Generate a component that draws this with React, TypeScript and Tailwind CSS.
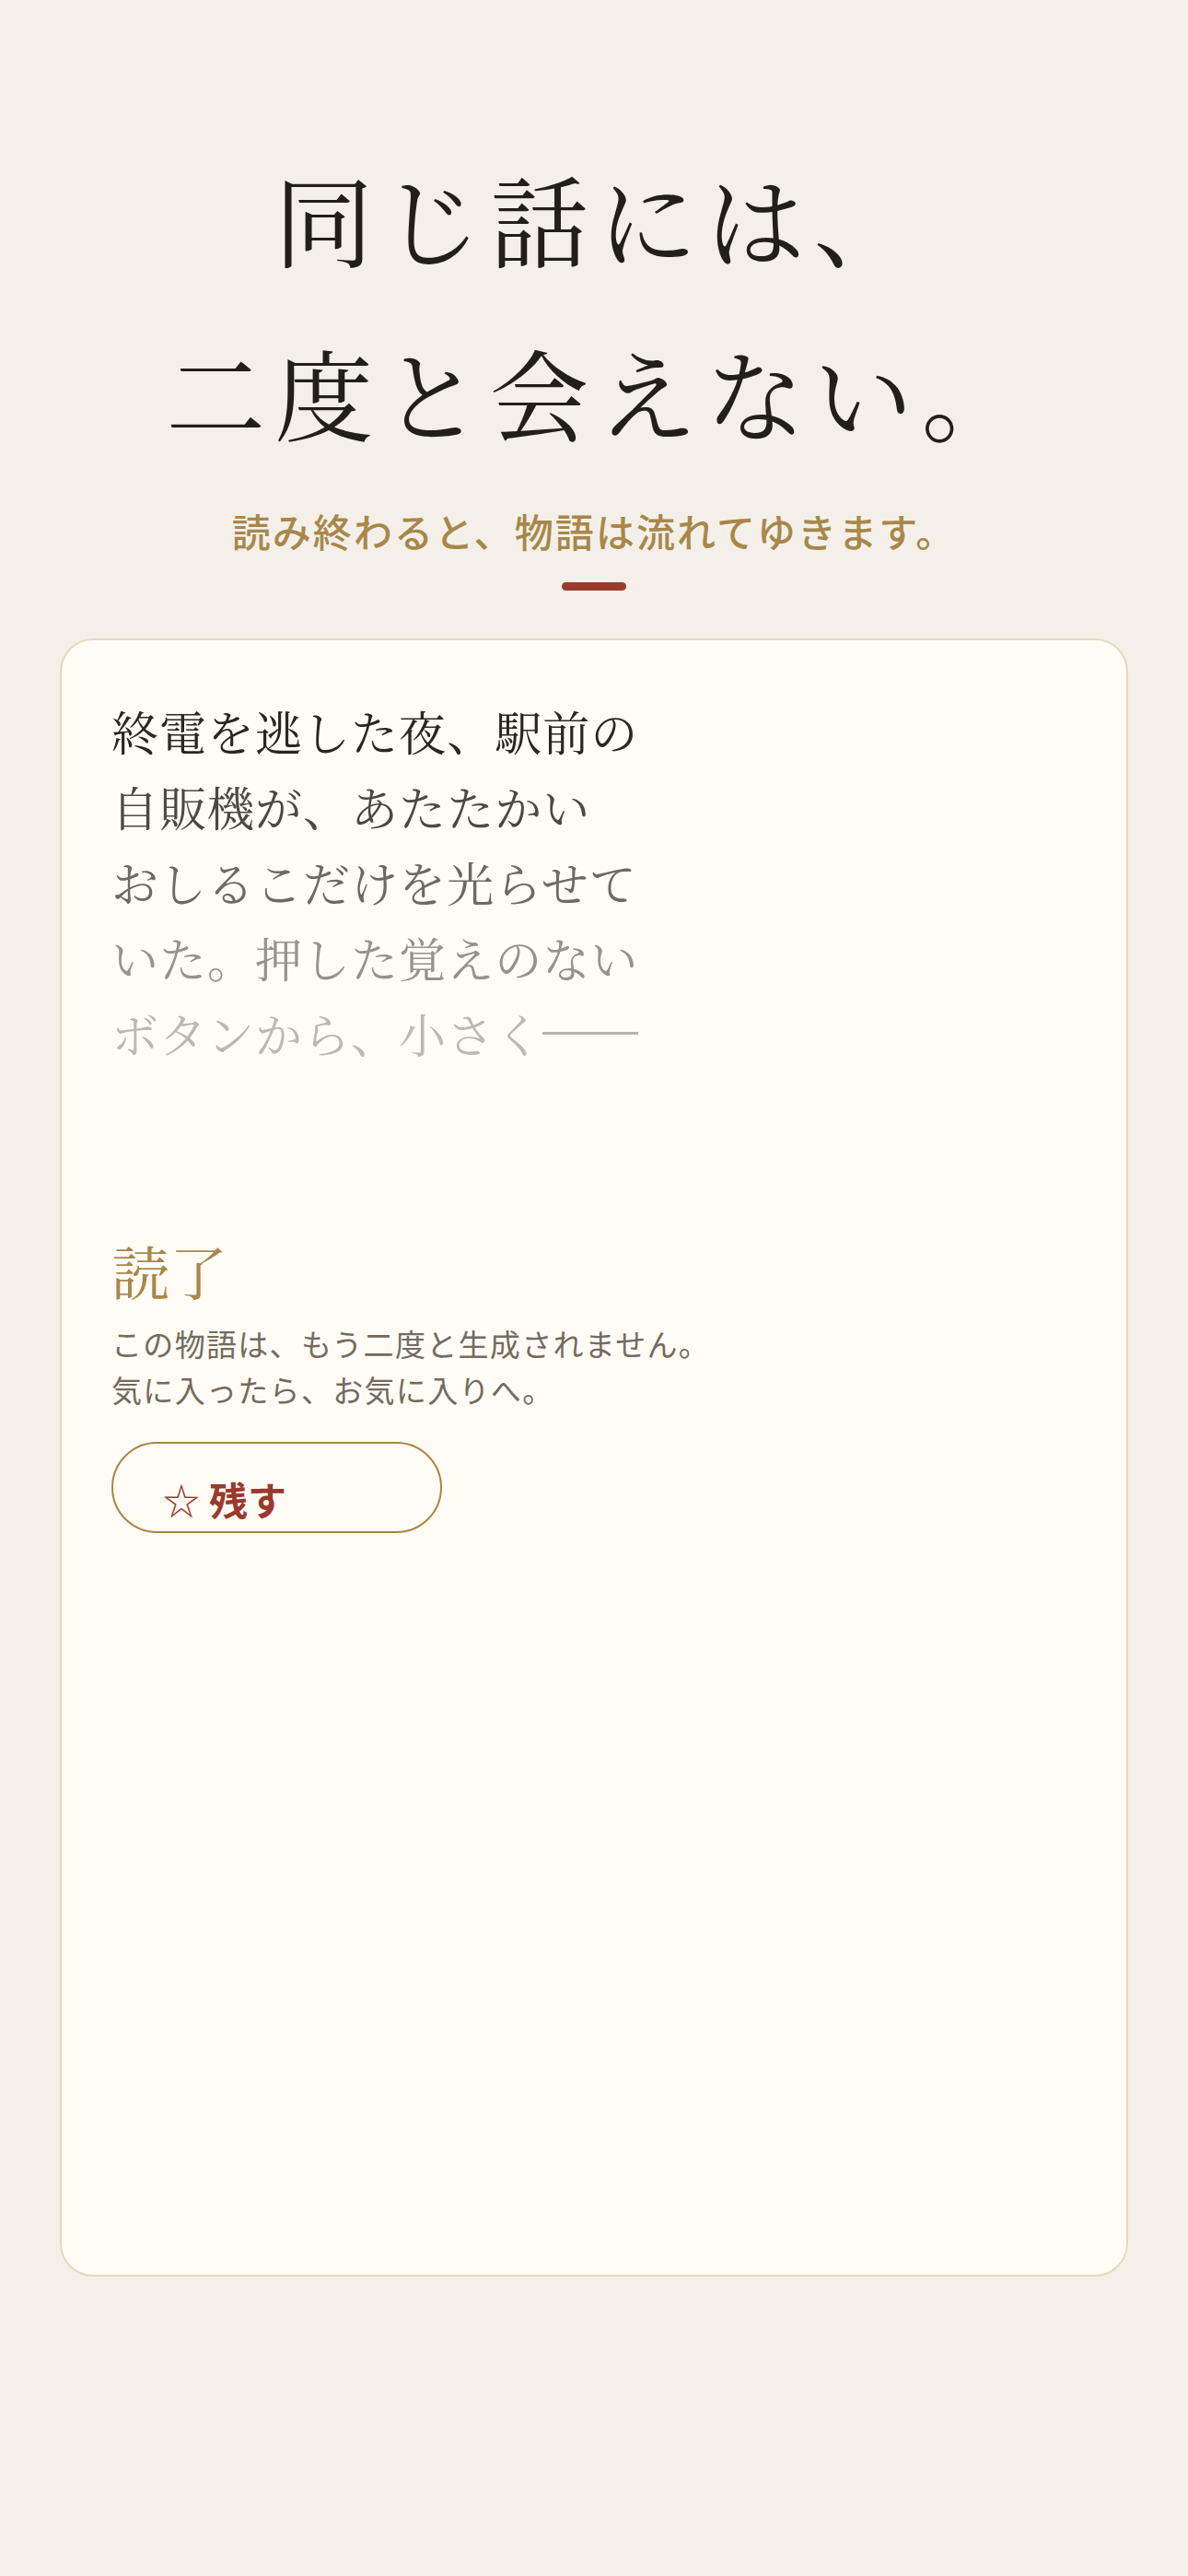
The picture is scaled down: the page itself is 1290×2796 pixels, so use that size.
import React from "react";

const serif = "font-['Noto_Serif_CJK_JP','Noto_Serif_JP','Noto_Sans_CJK_JP',serif]";
const sans = "font-['Noto_Sans_CJK_JP','Noto_Sans',sans-serif]";

const storyLines = [
    { text: "終電を逃した夜、駅前の", color: "text-[#2a2622]" },
    { text: "自販機が、あたたかい", color: "text-[#4d4843]" },
    { text: "おしるこだけを光らせて", color: "text-[#6e6962]" },
    { text: "いた。押した覚えのない", color: "text-[#97928b]" },
    { text: "ボタンから、小さく", color: "text-[#bdb8b1]", dash: true },
];

export default function App() {
    return (
        <div className="min-h-[2796px] bg-[#f4f0e9] pt-[141px]">
            <h1 className={`${serif} pl-[8px] text-center text-[108px] leading-[189px] tracking-[0.085em] text-[#221e19]`}>
                同じ話には、
                <br />
                二度と会えない。
            </h1>

            <p className={`${sans} mt-[25px] text-center text-[42px] leading-[63px] tracking-[0.05em] font-medium text-[#a8874a]`}>
                読み終わると、物語は流れてゆきます。
            </p>

            <div className="mt-[25px] flex justify-center">
                <div className="h-[9px] w-[70px] rounded-full bg-[#9a3a2e]" />
            </div>

            {/* story card */}
            <div className="mx-[65px] mt-[52px] h-[1778px] rounded-[36px] border-2 border-[#e5d8c1] bg-[#fffcf5] px-[54px] pt-[57px]">
                <div className={`${serif} text-[51px] leading-[82px] tracking-[0.02em]`}>
                    {storyLines.map((line) => (
                        <div key={line.text} className={line.color}>
                            {line.text}
                            {line.dash && (
                                <span className="inline-block w-[104px] overflow-hidden whitespace-nowrap bg-[linear-gradient(#b7b2aa,#b7b2aa)] bg-[length:100%_3px] bg-[position:0_40px] bg-no-repeat align-top tracking-normal text-transparent">
                                    ——
                                </span>
                            )}
                        </div>
                    ))}
                </div>

                <div className="mt-[175px]">
                    <h2 className={`${serif} text-[63px] leading-[82px] text-[#a8874a]`}>読了</h2>
                    <p className={`${sans} mt-[14px] text-[33px] leading-[50px] tracking-[0.04em] text-[#736b60]`}>
                        この物語は、もう二度と生成されません。
                        <br />
                        気に入ったら、お気に入りへ。
                    </p>
                    <button
                        className={`${sans} mt-[32px] flex h-[99px] w-[359px] items-center rounded-full border-2 border-[#a88646] pl-[54px] pt-[24px] text-[#9a3a2e]`}
                    >
                        <span className="text-[40px] leading-none">☆</span>
                        <span className="ml-[10px] text-[42px] font-bold leading-none">残す</span>
                    </button>
                </div>
            </div>
        </div>
    );
}
